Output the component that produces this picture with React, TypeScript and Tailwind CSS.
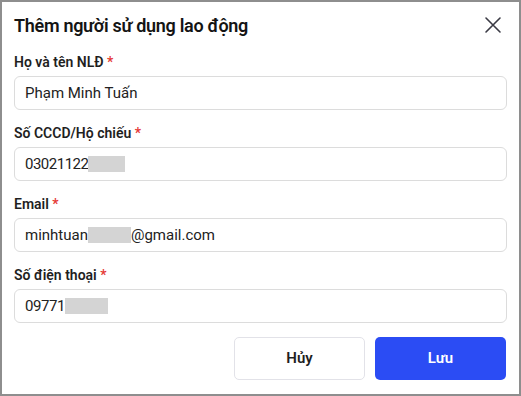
import React from "react";

const font = { fontFamily: "Roboto, 'Noto Sans', sans-serif" };

function Field({ label, children }: { label: string; children: React.ReactNode }) {
  return (
    <div className="flex flex-col">
      <div className="text-[14px] leading-[20px] font-semibold text-[#1f1f1f]">
        {label} <span className="text-[#e53935]">*</span>
      </div>
      <div className="mt-[4px] h-[34px] rounded-[6px] border border-[#dcdcdc] flex items-center pl-[10px] text-[15px] text-[#222]">
        {children}
      </div>
    </div>
  );
}

const Redact = ({ w }: { w: number }) => (
  <span className="inline-block h-[16px] bg-[#d4d4d4]" style={{ width: w }} />
);

export default function App() {
  return (
    <div style={font} className="w-[521px] h-[396px] bg-white border-2 border-[#8e8e8e] px-3 flex flex-col">
      <div className="flex items-center justify-between h-[28px] mt-[9px]">
        <div className="text-[18px] font-semibold text-[#141414] tracking-[-0.3px]">Thêm người sử dụng lao động</div>
        <svg width="18" height="18" viewBox="0 0 18 18" className="mr-[5px]" stroke="#3a3a44" strokeWidth="1.6" strokeLinecap="round">
          <path d="M2 2L16 16M16 2L2 16" />
        </svg>
      </div>
      <div className="mt-[13px] flex flex-col gap-[13px]">
        <Field label="Họ và tên NLĐ">Phạm Minh Tuấn</Field>
        <Field label="Số CCCD/Hộ chiếu">
          <span className="tracking-[-0.5px]">03021122</span>
          <Redact w={37} />
        </Field>
        <Field label="Email">
          <span>minhtuan</span>
          <Redact w={43} />
          <span>@gmail.com</span>
        </Field>
        <Field label="Số điện thoại">
          <span className="tracking-[-0.4px]">09771</span>
          <Redact w={43} />
        </Field>
      </div>
      <div className="flex justify-end gap-[10px] mt-[14px] mr-[1px]">
        <button className="w-[131px] h-[43px] rounded-[5px] border border-[#e2e2e8] bg-white text-[15px] font-semibold text-[#1f1f1f]">
          Hủy
        </button>
        <button className="w-[131px] h-[43px] rounded-[5px] bg-[#2b4cf4] text-[15px] font-semibold text-white">
          Lưu
        </button>
      </div>
    </div>
  );
}
